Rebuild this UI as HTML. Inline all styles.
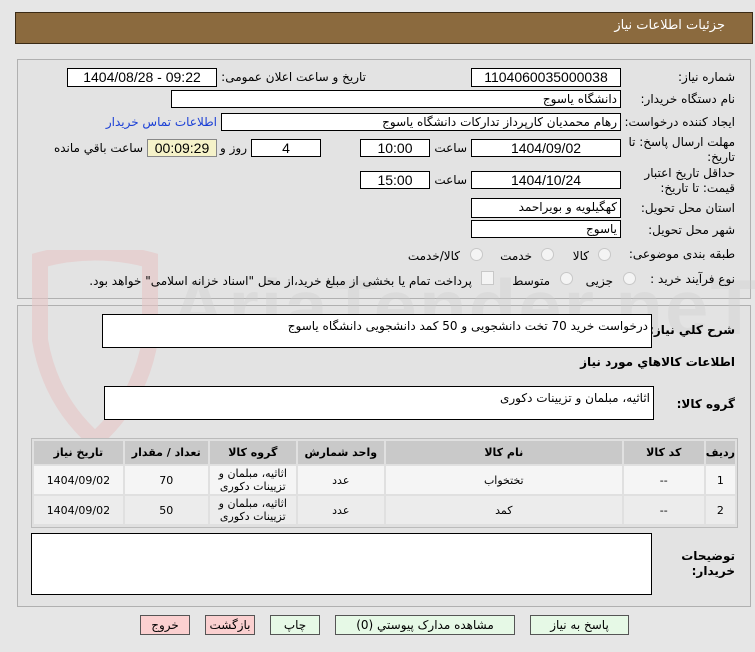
<!DOCTYPE html>
<html><head><meta charset="utf-8"><style>
body{margin:0;width:755px;height:652px;background:#e6e6e6;font-family:Tahoma,"DejaVu Sans","Liberation Sans",sans-serif;font-size:11px;color:#000;position:relative;overflow:hidden}
.a{position:absolute}
.box{position:absolute;background:#fff;border:1px solid #000;box-sizing:border-box;text-align:center;line-height:16px;font-size:14px;font-family:"Liberation Sans Narrow","Liberation Sans",sans-serif}
.r{text-align:right;padding-right:3px;font-family:Tahoma,"DejaVu Sans",sans-serif;font-size:12px}
.lbl{position:absolute;direction:rtl;text-align:right;white-space:nowrap;font-size:12px}
.panel{position:absolute;border:1px solid #b0b0b0;background:#e3e3e3;box-sizing:border-box}
table{border-collapse:separate;border-spacing:2px}
td,th{text-align:center;font-size:11px;padding:0}
th{background:#c9c9c9;height:23px;font-weight:bold}
td{height:28px;line-height:13px}
.btn{position:absolute;top:615px;height:20px;border:1px solid #555;box-sizing:border-box;text-align:center;line-height:18px;font-size:12px}
.rad{position:absolute;width:11px;height:11px;border:1px solid #c8c8c8;border-radius:50%;background:#f4f4f4}
</style></head><body>
<div class="a" style="left:15px;top:12px;width:738px;height:32px;background:#8b6a3e;border:1px solid #3a2a15;box-sizing:border-box"></div>
<div class="lbl" style="right:30px;top:18px;color:#fff;font-size:13px">جزئیات اطلاعات نیاز</div>

<div class="panel" style="left:17px;top:59px;width:734px;height:240px"></div>
<div class="panel" style="left:17px;top:305px;width:734px;height:302px"></div>

<svg class="a" style="left:20px;top:250px" width="150" height="200" viewBox="0 0 150 200"><path d="M20 10 Q75 -5 130 10 L130 90 Q120 150 75 190 Q30 150 20 90 Z" fill="none" stroke="#e6c4c4" stroke-width="16" opacity=".6"/></svg>
<div class="a" style="left:170px;top:262px;font-size:78px;font-weight:bold;color:#cfcfcf;opacity:.35;letter-spacing:2px;font-family:'Liberation Sans',sans-serif">AriaTender.neT</div>

<div class="lbl" style="right:20px;top:70px">شماره نیاز:</div>
<div class="box" style="left:471px;top:68px;width:150px;height:19px">1104060035000038</div>
<div class="lbl" style="right:389px;top:70px">تاریخ و ساعت اعلان عمومی:</div>
<div class="box" style="left:67px;top:68px;width:150px;height:19px">1404/08/28 - 09:22</div>

<div class="lbl" style="right:20px;top:92px">نام دستگاه خریدار:</div>
<div class="box r" style="left:171px;top:90px;width:450px;height:18px;direction:rtl">دانشگاه یاسوج</div>

<div class="lbl" style="right:20px;top:115px">ایجاد کننده درخواست:</div>
<div class="box r" style="left:221px;top:113px;width:400px;height:18px;direction:rtl">رهام محمدیان کارپرداز تدارکات دانشگاه یاسوج</div>
<div class="lbl" style="right:538px;top:115px;color:#1a3fd6">اطلاعات تماس خریدار</div>

<div class="lbl" style="right:20px;top:135px;line-height:15px">مهلت ارسال پاسخ: تا<br>تاریخ:</div>
<div class="box" style="left:471px;top:139px;width:150px;height:18px">1404/09/02</div>
<div class="lbl" style="right:288px;top:141px">ساعت</div>
<div class="box" style="left:360px;top:139px;width:70px;height:18px">10:00</div>
<div class="box" style="left:251px;top:139px;width:70px;height:18px">4</div>
<div class="lbl" style="right:508px;top:141px">روز و</div>
<div class="box" style="left:147px;top:139px;width:70px;height:18px;background:#f5f2c9;border-color:#888">00:09:29</div>
<div class="lbl" style="right:612px;top:141px">ساعت باقي مانده</div>

<div class="lbl" style="right:20px;top:166px;line-height:15px">حداقل تاریخ اعتبار<br>قیمت: تا تاریخ:</div>
<div class="box" style="left:471px;top:171px;width:150px;height:18px">1404/10/24</div>
<div class="lbl" style="right:288px;top:173px">ساعت</div>
<div class="box" style="left:360px;top:171px;width:70px;height:18px">15:00</div>

<div class="lbl" style="right:20px;top:201px">استان محل تحویل:</div>
<div class="box r" style="left:471px;top:198px;width:150px;height:20px;direction:rtl">کهگیلویه و بویراحمد</div>
<div class="lbl" style="right:20px;top:223px">شهر محل تحویل:</div>
<div class="box r" style="left:471px;top:220px;width:150px;height:18px;direction:rtl">یاسوج</div>

<div class="lbl" style="right:20px;top:247px">طبقه بندی موضوعی:</div>
<div class="rad" style="left:598px;top:248px"></div><div class="lbl" style="right:166px;top:249px">کالا</div>
<div class="rad" style="left:541px;top:248px"></div><div class="lbl" style="right:223px;top:249px">خدمت</div>
<div class="rad" style="left:470px;top:248px"></div><div class="lbl" style="right:295px;top:249px">کالا/خدمت</div>

<div class="lbl" style="right:20px;top:272px">نوع فرآیند خرید :</div>
<div class="rad" style="left:623px;top:272px"></div><div class="lbl" style="right:142px;top:274px">جزیی</div>
<div class="rad" style="left:560px;top:272px"></div><div class="lbl" style="right:205px;top:274px">متوسط</div>
<div class="a" style="left:481px;top:271px;width:11px;height:12px;border:1px solid #c8c8c8;background:#f4f4f4"></div>
<div class="lbl" style="right:283px;top:274px">پرداخت تمام یا بخشی از مبلغ خرید،از محل "اسناد خزانه اسلامی" خواهد بود.</div>

<div class="lbl" style="right:20px;top:323px;font-weight:bold">شرح كلي نياز:</div>
<div class="box r" style="left:102px;top:314px;width:550px;height:34px;direction:rtl;line-height:22px;text-align:right">درخواست خرید 70 تخت دانشجویی و 50 کمد دانشجویی دانشگاه یاسوج</div>
<div class="lbl" style="right:20px;top:355px;font-weight:bold">اطلاعات كالاهاي مورد نياز</div>
<div class="lbl" style="right:20px;top:397px;font-weight:bold">گروه کالا:</div>
<div class="box r" style="left:104px;top:386px;width:550px;height:34px;direction:rtl;line-height:22px;text-align:right">اثاثیه، مبلمان و تزیینات دکوری</div>

<div class="a" style="left:31px;top:438px;width:707px;height:90px;border:1px solid #bbb;box-sizing:border-box;background:#e0e0e0">
<table style="width:705px;direction:rtl">
<tr><th style="width:27px">ردیف</th><th style="width:80px">کد کالا</th><th style="width:236px">نام کالا</th><th style="width:86px">واحد شمارش</th><th style="width:86px">گروه کالا</th><th style="width:83px">تعداد / مقدار</th><th>تاریخ نیاز</th></tr>
<tr style="background:#f5f5f5"><td>1</td><td>--</td><td>تختخواب</td><td>عدد</td><td>اثاثیه، مبلمان و تزیینات دکوری</td><td>70</td><td>1404/09/02</td></tr>
<tr style="background:#ececec"><td>2</td><td>--</td><td>کمد</td><td>عدد</td><td>اثاثیه، مبلمان و تزیینات دکوری</td><td>50</td><td>1404/09/02</td></tr>
</table></div>

<div class="lbl" style="right:20px;top:549px;font-weight:bold;line-height:15px">توضیحات<br>خریدار:</div>
<div class="box" style="left:31px;top:533px;width:621px;height:62px"></div>

<div class="btn" style="left:140px;width:50px;background:#fbd0d0">خروج</div>
<div class="btn" style="left:205px;width:50px;background:#fbd0d0">بازگشت</div>
<div class="btn" style="left:270px;width:50px;background:#e6f9e6">چاپ</div>
<div class="btn" style="left:335px;width:180px;background:#e6f9e6">مشاهده مدارک پیوستي (0)</div>
<div class="btn" style="left:530px;width:99px;background:#e6f9e6">پاسخ به نیاز</div>
</body></html>
